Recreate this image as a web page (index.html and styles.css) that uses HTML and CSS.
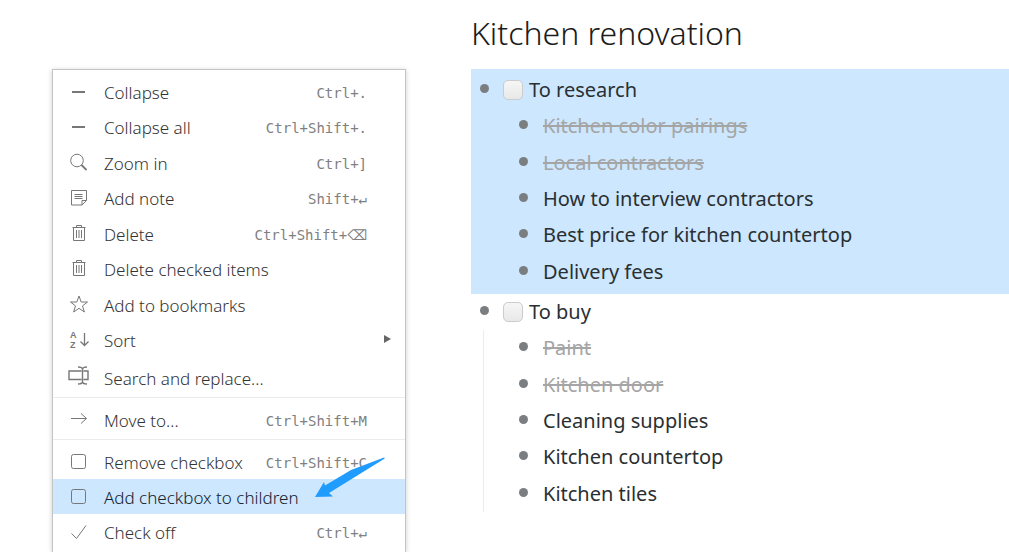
FILE: index.html
```html
<!DOCTYPE html>
<html lang="en">
<head>
<meta charset="utf-8">
<title>Kitchen renovation</title>
<link rel="stylesheet" href="styles.css">
</head>
<body>
<nav class="menu" aria-label="Item actions">
  <div class="group group-main">
    <button class="item"><svg class="icon" viewBox="0 0 24 24"><path class="thick" d="M6 11h13"/></svg><span class="label">Collapse</span><kbd>Ctrl+.</kbd></button>
    <button class="item"><svg class="icon" viewBox="0 0 24 24"><path class="thick" d="M6 11h13"/></svg><span class="label">Collapse all</span><kbd>Ctrl+Shift+.</kbd></button>
    <button class="item"><svg class="icon" viewBox="0 0 24 24"><circle cx="11" cy="8.500" r="6.300"/><path d="M15.500 13l5 5" stroke-width="1.800"/></svg><span class="label">Zoom in</span><kbd>Ctrl+]</kbd></button>
    <button class="item"><svg class="icon" viewBox="0 0 24 24"><path d="M5.500 3.500h15v10l-4.500 4.500h-10.500zM20.500 13.500h-4.500v4.500M8.500 7.500h8M8.500 9.500h8M8.500 11.500h8"/></svg><span class="label">Add note</span><kbd>Shift+↵</kbd></button>
    <button class="item"><svg class="icon" viewBox="0 0 24 24"><path d="M6.500 4.500h13M7.500 4.500v13h11v-13M10.500 4V2.500h5V4M10.500 7v8M13 7v8M15.500 7v8"/></svg><span class="label">Delete</span><kbd>Ctrl+Shift+<span class="key-wide">⌫</span></kbd></button>
    <button class="item"><svg class="icon" viewBox="0 0 24 24"><path d="M6.500 4.500h13M7.500 4.500v13h11v-13M10.500 4V2.500h5V4M10.500 7v8M13 7v8M15.500 7v8"/></svg><span class="label">Delete checked items</span></button>
    <button class="item"><svg class="icon" viewBox="0 0 24 24"><path d="M13 2l2.200 6h6.300l-5 3.900 1.900 6.100-5.400-3.700-5.400 3.700 1.900-6.100-5-3.900h6.300z"/></svg><span class="label">Add to bookmarks</span></button>
    <button class="item"><svg class="icon" viewBox="0 0 24 24"><text x="4" y="9">A</text><text x="4" y="19">Z</text><path d="M18.500 4v12.500M14.500 12.500l4 4 4-4" stroke-width="1.300"/></svg><span class="label">Sort</span><svg class="submenu" viewBox="0 0 8 8"><path d="M1 0l7 4-7 4z"/></svg></button>
  </div>
  <button class="item item-tall"><svg class="icon" viewBox="0 0 24 24"><path d="M15.500 5H3v8.500h12.500M17.500 5h4.500v8.500h-4.500M16.500 2.500v14M12 1q4 0 4.500 2 .5-2 4.500-2M12 18q4 0 4.500-2 .5 2 4.500 2" stroke-width="1.400"/></svg><span class="label">Search and replace...</span></button>
  <div class="group group-ruled">
    <button class="item"><svg class="icon" viewBox="0 0 24 24"><path d="M5 10.500h15.500M15 5.500l5.500 5-5.500 5"/></svg><span class="label">Move to...</span><kbd>Ctrl+Shift+M</kbd></button>
  </div>
  <div class="group group-ruled">
    <button class="item"><svg class="icon" viewBox="0 0 24 24"><rect x="5.500" y="4.500" width="14" height="14" rx="2"/></svg><span class="label">Remove checkbox</span><kbd>Ctrl+Shift+C</kbd></button>
    <button class="item item-active"><svg class="icon" viewBox="0 0 24 24"><rect x="5.500" y="4.500" width="14" height="14" rx="2"/></svg><span class="label">Add checkbox to children</span></button>
    <button class="item"><svg class="icon" viewBox="0 0 24 24"><path d="M5.500 13.500l5 5 9.500-13"/></svg><span class="label">Check off</span><kbd>Ctrl+↵</kbd></button>
    <svg class="pointer" viewBox="0 0 70 40"><path d="M0 40L9 25l1 3.500L36 13 69 .5q1.500 0 0 1.500L14 36l4 3.500z"/></svg>
  </div>
</nav>
<main class="page">
  <h1>Kitchen renovation</h1>
  <section class="branch branch-selected">
    <label class="parent"><span class="dot"></span><input type="checkbox">To research</label>
    <ul>
      <li><span class="dot"></span><s>Kitchen color pairings</s></li>
      <li><span class="dot"></span><s>Local contractors</s></li>
      <li><span class="dot"></span>How to interview contractors</li>
      <li><span class="dot"></span>Best price for kitchen countertop</li>
      <li><span class="dot"></span>Delivery fees</li>
    </ul>
  </section>
  <section class="branch">
    <label class="parent"><span class="dot"></span><input type="checkbox">To buy</label>
    <ul>
      <li><span class="dot"></span><s>Paint</s></li>
      <li><span class="dot"></span><s>Kitchen door</s></li>
      <li><span class="dot"></span>Cleaning supplies</li>
      <li><span class="dot"></span>Kitchen countertop</li>
      <li><span class="dot"></span>Kitchen tiles</li>
    </ul>
  </section>
</main>
</body>
</html>
```
FILE: styles.css
```css
* { box-sizing: border-box; }
body {
  margin: 0;
  height: 100vh;
  overflow: hidden;
  display: flex;
  gap: 65px;
  padding-left: 52px;
  background: #fff;
  color: #2a2f32;
  font-family: "Noto Sans", sans-serif;
}
.menu {
  flex: none;
  width: 354px;
  margin-top: 69px;
  padding-top: 5px;
  border: 1px solid #c4c4c4;
  border-bottom: 0;
  background: #fff;
  box-shadow: 0 1px 5px rgba(0, 0, 0, .2);
}
.group { position: relative; }
.group-main {
  display: grid;
  grid-auto-rows: 1fr;
  min-height: 284px;
}
.group-ruled {
  border-top: 1px solid #ececec;
  padding: 4px 0 2px;
}
.item {
  display: flex;
  align-items: center;
  width: 100%;
  min-height: 35px;
  padding: 0 38px 0 13px;
  border: 0;
  background: none;
  color: #333;
  font: 300 17px/24px "Noto Sans", sans-serif;
  text-align: left;
}
.item-tall { min-height: 38px; }
.item-active { background: #cce7fe; color: #13222e; }
.label { flex: 1; white-space: nowrap; }
.group-ruled .label,
.group-ruled kbd,
.item-tall .label { padding-top: 2px; }
.icon {
  width: 24px;
  height: 24px;
  margin-right: 14px;
  fill: none;
  stroke: #777;
  stroke-width: 1;
}
.icon .thick { stroke-width: 2; }
.icon text {
  fill: #777;
  stroke: none;
  font: bold 9px "Liberation Sans", sans-serif;
}
kbd {
  display: flex;
  align-items: center;
  color: #808080;
  font: 14px/20px "DejaVu Sans Mono", monospace;
}
.key-wide { font: 14px/20px "DejaVu Sans", sans-serif; }
.submenu {
  width: 8px;
  height: 8px;
  margin: 0 -24px 4px 0;
  fill: #666;
}
.pointer {
  position: absolute;
  top: 17px;
  right: 20px;
  width: 70px;
  height: 40px;
  fill: #209cff;
}
.page { flex: 1; min-width: 0; }
h1 {
  margin: 0;
  padding-bottom: 3px;
  color: #1c1c1c;
  font: 300 32px/66px "Noto Sans", sans-serif;
}
.branch { font-size: 20px; line-height: 28px; }
.branch-selected { padding: 3px 0 4px; background: #cce7fe; }
.parent {
  display: flex;
  align-items: center;
  height: 36px;
  padding-left: 9px;
}
.dot {
  width: 9px;
  height: 9px;
  margin-bottom: 3px;
  border-radius: 50%;
  background: #7b7e81;
}
.parent input {
  appearance: none;
  width: 20px;
  height: 20px;
  margin: 0 6px 0 14px;
  border: 1px solid #ccc;
  border-radius: 5px;
  background: linear-gradient(#f6f6f6, #e8e8e8);
}
ul {
  display: grid;
  grid-auto-rows: 1fr;
  min-height: 182px;
  margin: 0 0 0 12px;
  padding: 0 0 0 35px;
  border-left: 1px solid #ececec;
  list-style: none;
}
.branch-selected ul { border-color: transparent; }
li { display: flex; align-items: center; gap: 15px; white-space: nowrap; }
s { color: #a5a5a5; text-decoration-thickness: 2px; }
```
